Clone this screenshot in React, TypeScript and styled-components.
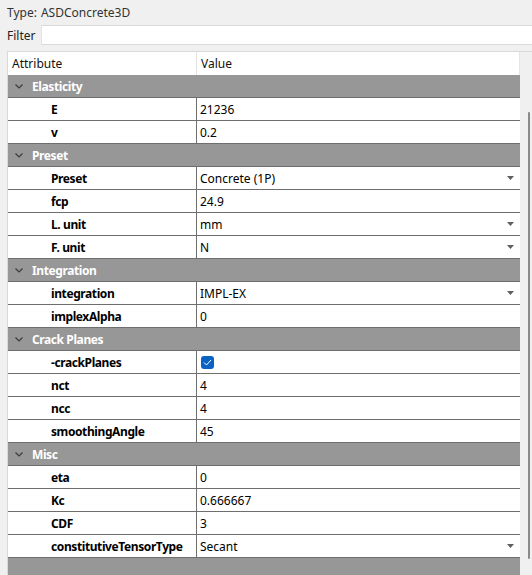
import React from "react";
import styled, { createGlobalStyle } from "styled-components";

const Global = createGlobalStyle`
  html, body { margin: 0; padding: 0; background: #f0f0f0; }
  body { font-family: "Noto Sans", "Open Sans", sans-serif; font-size: 12px; color: #000; overflow: hidden; }
`;

const Page = styled.div`
  width: 532px;
  height: 575px;
  display: flex;
  flex-direction: column;
  overflow: hidden;
`;

const TypeLine = styled.div`
  height: 25px;
  display: flex;
  align-items: center;
  padding-left: 7px;
  color: #333;
  gap: 4px;
`;

const FilterRow = styled.div`
  display: flex;
  align-items: center;
  height: 20px;
  color: #222;
`;

const FilterLabel = styled.div`
  width: 34px;
  padding-left: 7px;
`;

const FilterInput = styled.div`
  flex: 1;
  height: 18px;
  background: #fff;
  border-top: 1px solid #d9d9d9;
  border-bottom: 1px solid #d9d9d9;
  border-left: 1px solid #e3e3e3;
`;

const TableFrame = styled.div`
  margin-top: 6px;
  margin-left: 7px;
  flex: 1;
  display: flex;
  border-top: 1px solid #d9d9d9;
  border-left: 1px solid #d9d9d9;
  min-height: 0;
`;

const Grid = styled.div`
  width: 512px;
  display: flex;
  flex-direction: column;
  background: #979797;
`;

const HeaderRow = styled.div`
  height: 23px;
  display: grid;
  grid-template-columns: 189px 1fr;
  background: #fff;
  border-right: 1px solid #e5e5e5;
`;

const HeaderCell = styled.div<{ $divider?: boolean }>`
  display: flex;
  align-items: center;
  padding-left: 4px;
  border-right: ${(p) => (p.$divider ? "1px solid #e5e5e5" : "none")};
  color: #111;
`;

const GroupRow = styled.div`
  height: 22px;
  border-bottom: 1px solid #6e6e6e;
  background: #979797;
  display: flex;
  align-items: center;
  color: #fff;
  font-weight: 700;
  letter-spacing: -0.4px;
`;

const Chevron = styled.svg`
  width: 8px;
  height: 5px;
  margin-left: 7px;
  margin-right: 9px;
`;

const DataRow = styled.div`
  height: 22px;
  border-bottom: 1px solid #6e6e6e;
  background: #fff;
  display: grid;
  grid-template-columns: 189px 1fr;
`;

const NameCell = styled.div`
  display: flex;
  align-items: center;
  padding-left: 43px;
  font-weight: 700;
  letter-spacing: -0.4px;
  border-right: 1px solid #6e6e6e;
`;

const ValueCell = styled.div`
  display: flex;
  align-items: center;
  padding-left: 3px;
  padding-right: 6px;
  justify-content: space-between;
`;

const DropArrow = styled.svg`
  width: 7px;
  height: 4px;
`;

const Check = styled.div`
  width: 13px;
  height: 13px;
  border-radius: 3px;
  background: #0a62c4;
  display: flex;
  align-items: center;
  justify-content: center;
  margin-left: 1px;
`;

const Filler = styled.div`
  flex: 1;
  background: #979797;
`;

const ScrollTrack = styled.div`
  width: 12px;
  background: #f0f0f0;
  display: flex;
  justify-content: flex-end;
  padding-right: 2px;
  box-sizing: border-box;
`;

const Thumb = styled.div`
  width: 2px;
  margin-top: 60px;
  height: 447px;
  background: #8a8a8a;
  border-radius: 1px;
`;

type Item =
  | { group: string }
  | { name: string; value?: string; drop?: boolean; check?: boolean };

const items: Item[] = [
  { group: "Elasticity" },
  { name: "E", value: "21236" },
  { name: "v", value: "0.2" },
  { group: "Preset" },
  { name: "Preset", value: "Concrete (1P)", drop: true },
  { name: "fcp", value: "24.9" },
  { name: "L. unit", value: "mm", drop: true },
  { name: "F. unit", value: "N", drop: true },
  { group: "Integration" },
  { name: "integration", value: "IMPL-EX", drop: true },
  { name: "implexAlpha", value: "0" },
  { group: "Crack Planes" },
  { name: "-crackPlanes", check: true },
  { name: "nct", value: "4" },
  { name: "ncc", value: "4" },
  { name: "smoothingAngle", value: "45" },
  { group: "Misc" },
  { name: "eta", value: "0" },
  { name: "Kc", value: "0.666667" },
  { name: "CDF", value: "3" },
  { name: "constitutiveTensorType", value: "Secant", drop: true },
];

export default function App() {
  return (
    <Page>
      <Global />
      <TypeLine>
        <span>Type:</span>
        <span>ASDConcrete3D</span>
      </TypeLine>
      <FilterRow>
        <FilterLabel>Filter</FilterLabel>
        <FilterInput />
      </FilterRow>
      <TableFrame>
        <Grid>
          <HeaderRow>
            <HeaderCell $divider>Attribute</HeaderCell>
            <HeaderCell>Value</HeaderCell>
          </HeaderRow>
          {items.map((it, i) =>
            "group" in it ? (
              <GroupRow key={i}>
                <Chevron viewBox="0 0 8 5">
                  <polyline points="0.5,0.5 4,4 7.5,0.5" fill="none" stroke="#3a3a3a" strokeWidth="1.2" />
                </Chevron>
                {it.group}
              </GroupRow>
            ) : (
              <DataRow key={i}>
                <NameCell>{it.name}</NameCell>
                <ValueCell>
                  {it.check ? (
                    <Check>
                      <svg width="9" height="7" viewBox="0 0 9 7">
                        <polyline points="1,3.5 3.5,6 8,1" fill="none" stroke="#fff" strokeWidth="1" />
                      </svg>
                    </Check>
                  ) : (
                    <span>{it.value}</span>
                  )}
                  {it.drop && (
                    <DropArrow viewBox="0 0 7 4">
                      <polygon points="0,0 7,0 3.5,4" fill="#606060" />
                    </DropArrow>
                  )}
                </ValueCell>
              </DataRow>
            )
          )}
          <Filler />
        </Grid>
        <ScrollTrack>
          <Thumb />
        </ScrollTrack>
      </TableFrame>
    </Page>
  );
}
